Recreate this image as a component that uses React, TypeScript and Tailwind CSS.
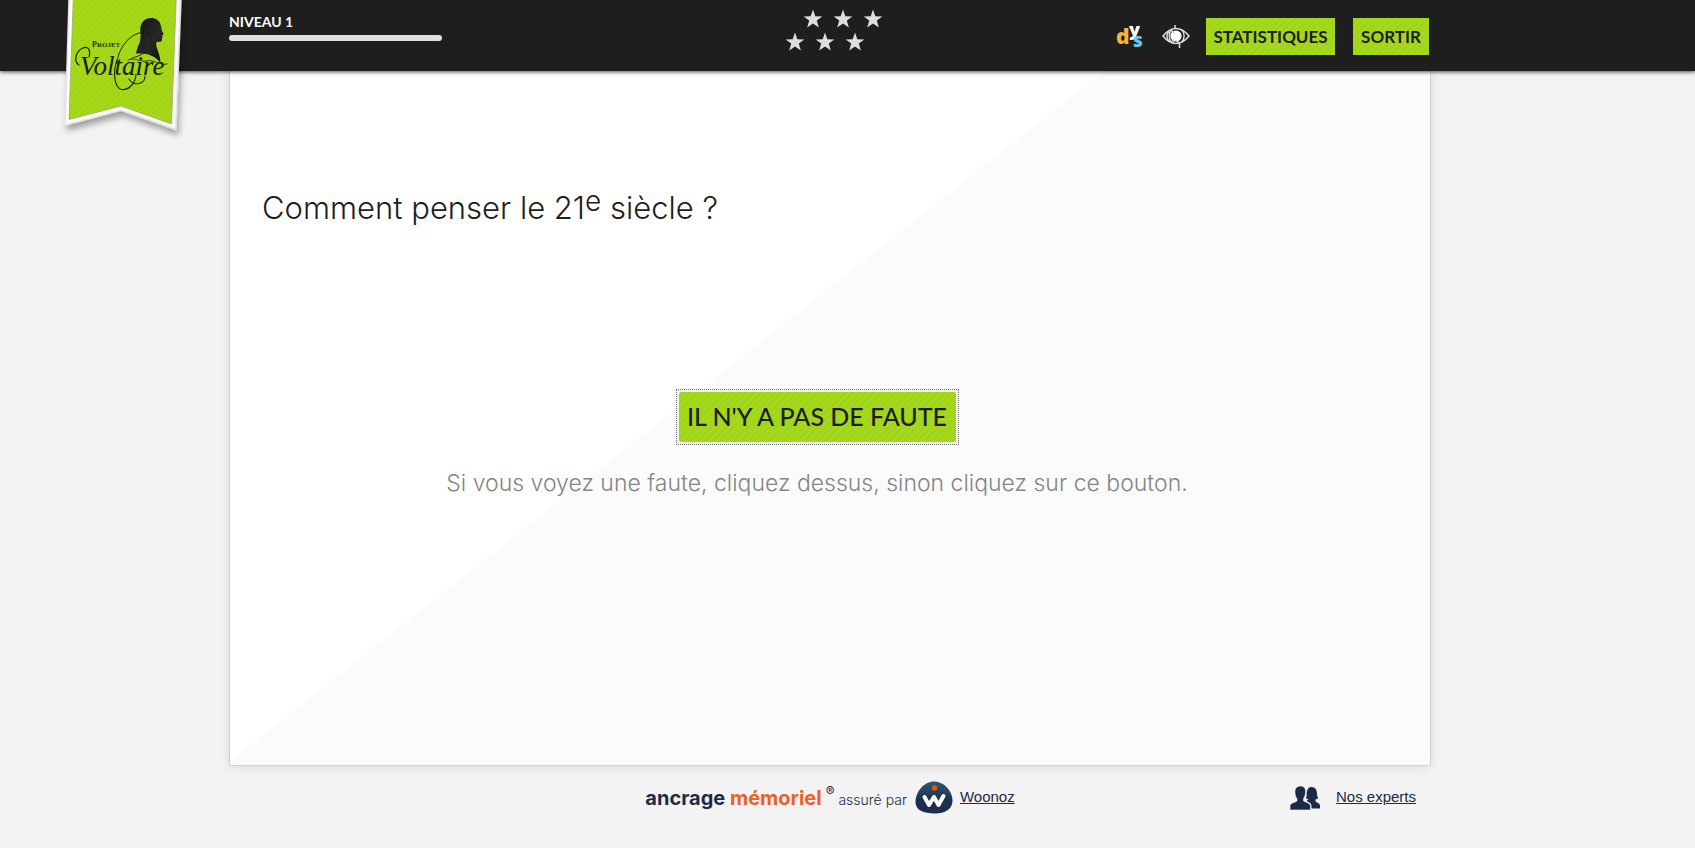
import React from "react";

const display = "font-['Lato','Open_Sans',sans-serif]";
const body = "font-['Inter','Noto_Sans',sans-serif]";
const stripes =
  "bg-[#a2d619] bg-[repeating-linear-gradient(135deg,#a7d925_0px,#a7d925_1px,#a1d517_2px,#a1d517_5px)]";

function RibbonLogo() {
  return (
    <svg width="130" height="142" viewBox="60 0 130 142" role="img" aria-label="Projet Voltaire">
      <defs>
        <pattern id="ribbon" width="6" height="6" patternUnits="userSpaceOnUse">
          <rect width="6" height="6" fill="#a1d516" />
          <path d="M-1 7L7-1M-1 1L1-1M5 7L7 5" stroke="#abdc30" strokeWidth="0.9" />
        </pattern>
        <linearGradient id="bust" x1="0" y1="0" x2="1" y2="1">
          <stop offset="0" stopColor="#111" />
          <stop offset="0.55" stopColor="#282828" />
          <stop offset="1" stopColor="#080808" />
        </linearGradient>
        <filter id="shade" x="-20%" y="-20%" width="140%" height="140%">
          <feDropShadow dx="2" dy="5" stdDeviation="3" floodColor="#000" floodOpacity="0.35" />
        </filter>
      </defs>
      <path d="M68.500-8L64.500 126L121 111L176.500 130.500L182-8Z" fill="#e4e4e4" filter="url(#shade)" />
      <path d="M70-8L66 124L121 109.500L175 128L180-8Z" fill="#fff" />
      <path d="M73.500-8L69 119.500L121 106L171.500 124L176.500-8Z" fill="url(#ribbon)" stroke="#9aa872" strokeWidth="0.8" />
      <path
        d="M140.500 33C139.500 26 142 20 147.500 18.400C153 16.800 158.500 19 160.200 23.500C161.400 26.500 161.500 29 162 31L163.800 34.200L162.300 35.300L162.500 37L161.800 38L162 40.200C161.500 42 159 42 157 41.700L156 44C156.500 49 160 53 160.500 63C158 59 153 56 148.500 54.500C145 53.500 139 53.500 136 53.500C136.500 50 138 46 139.500 43C140.500 40 140.900 36 140.500 33Z"
        fill="url(#bust)"
      />
      <text x="92" y="47" fontFamily="Liberation Serif, serif" fontWeight="700" fontSize="8" fill="#26330b">
        P<tspan fontSize="7">ROJET</tspan>
      </text>
      <text x="80" y="75" fontFamily="Liberation Serif, serif" fontStyle="italic" fontSize="27" fill="#1a2207">
        Voltaire
      </text>
      <g fill="none" stroke="#1a2207" strokeLinecap="round">
        <path d="M79 65C73 61 76 51 83 48C88 46 91 50 89 57" strokeWidth="1.200" />
        <path d="M117 62C119 46 132 31 146 32.500C155 34 153 47 144 53C138 57 133 57 131 59" strokeWidth="1" />
        <path d="M117 60C113 72 114 85 120 89C128 92 136 83 136 74M129 79C134 87 145 84 145 76" strokeWidth="1.100" />
        <path d="M128 60C134 57 140 62 146 61C155 59 160 66 167 64" strokeWidth="0.800" />
      </g>
    </svg>
  );
}

const starCenters = [
  [28, 11],
  [58, 11],
  [88, 11],
  [10, 34],
  [40, 34],
  [70, 34],
];

function Stars() {
  return (
    <svg width="98" height="44" viewBox="0 0 98 44" role="img" aria-label="6 étoiles">
      {starCenters.map(([x, y]) => (
        <path
          key={`${x}-${y}`}
          transform={`translate(${x} ${y})`}
          d="M0-9.500L2.300-2.800L9.300-2.600L3.800 1.600L5.800 8.500L0 4.500L-5.800 8.500L-3.800 1.600L-9.300-2.600L-2.300-2.800Z"
          fill="#dedede"
        />
      ))}
    </svg>
  );
}

function DysIcon() {
  return (
    <svg
      width="28"
      height="34"
      viewBox="0 0 28 34"
      aria-hidden="true"
      fontFamily="Open Sans, sans-serif"
      fontWeight="800"
    >
      <text x="0" y="24" fontSize="21" fill="#f9b233">d</text>
      <text x="13" y="16" fontSize="18" fill="#fff">y</text>
      <text x="17" y="27" fontSize="19" fill="#6fc4ee">s</text>
    </svg>
  );
}

function EyeIcon() {
  return (
    <svg width="28" height="24" viewBox="0 0 28 24" aria-hidden="true" fill="none" stroke="#dcdcdc">
      <path d="M1 11C5 6 9 3.500 14 3.500C19 3.500 23 6 27 11C23 16 19 18.500 14 18.500C9 18.500 5 16 1 11Z" strokeWidth="1.500" />
      <path d="M7 6C4.500 9 4.500 13 7 16.500M9.500 5C6.500 8.500 6.500 13.500 9.500 17.500M19.500 4.500C23 8 23 14 19.500 17.500" strokeWidth="1.500" />
      <circle cx="14" cy="11" r="5.600" fill="#fff" stroke="none" />
      <path d="M13 0V4M13 15L17.500 18V23M11 14V18M9 5L13 9" strokeWidth="1.500" />
    </svg>
  );
}

function WoonozIcon() {
  return (
    <svg width="38" height="33" viewBox="0 0 38 33" aria-hidden="true">
      <defs>
        <linearGradient id="pebble" x1="0" y1="0" x2="0" y2="1">
          <stop offset="0" stopColor="#34566f" />
          <stop offset="0.600" stopColor="#1b3050" />
        </linearGradient>
      </defs>
      <path d="M19 0.500C29 0.500 37.500 10 37.500 20C37.500 28 30 32.500 20 32.500C8 32.500 0.500 29 0.500 21C0.500 11 9 0.500 19 0.500Z" fill="url(#pebble)" />
      <path d="M9.500 16L14 24L19 16L23.500 24L28.500 15" fill="none" stroke="#fff" strokeWidth="4" strokeLinecap="round" strokeLinejoin="round" />
      <circle cx="19.500" cy="7" r="2.800" fill="#e8500f" />
    </svg>
  );
}

function ExpertsIcon() {
  return (
    <svg width="30" height="24" viewBox="0 0 30 24" aria-hidden="true" fill="#1b2b47">
      <path d="M21.500 1C25.500 1 27 4 27 8C27 10 28 11 28 12.500L25.500 13.500V15.500C27.500 17 30 17 30 20V22.500H21.500V20C21.500 17 18.500 16 16.500 15L18.500 13.500L16 12.500C17 10 16.500 8 16.800 6C17.300 3 18.500 1 21.500 1Z" />
      <path
        d="M10.500 0C14.500 0 16 3 15.500 7C15.300 10 14 11.500 13.500 12.500V15C16 16.500 20.500 17 20.500 20V24H0V20C0 17 5 16.500 7 15V12.500C6 11.500 5.200 10 5 7C4.500 3 6.500 0 10.500 0Z"
        stroke="#f3f3f3"
        strokeWidth="0.600"
      />
    </svg>
  );
}

export default function App() {
  return (
    <div className={`min-h-screen bg-[#f3f3f3] text-[#1e1e1e] ${body}`}>
      <header className="relative z-10 h-[71px] bg-[#1e1e1e] pr-[35px] shadow-[0_1px_4px_rgba(0,0,0,0.7)]">
        <a href="#accueil" className="absolute top-0 left-[60px]">
          <RibbonLogo />
        </a>
        <div className="mx-auto grid max-w-[1202px] grid-cols-[1fr_auto_1fr]">
          <div className={`pt-3 text-white ${display}`}>
            <div id="niveau" className="text-[14px] leading-5 font-bold">NIVEAU 1</div>
            <div
              role="progressbar"
              aria-labelledby="niveau"
              aria-valuenow={0}
              className="mt-[3px] h-[6px] w-[213px] rounded-full bg-[#dfdfdf]"
            />
          </div>
          <div className="pt-2 pl-2">
            <Stars />
          </div>
          <div className={`flex items-center justify-end pt-[18px] pr-[2px] ${display}`}>
            <button type="button" aria-label="Mode dys" className="mr-[18px]">
              <DysIcon />
            </button>
            <button type="button" aria-label="Accessibilité visuelle" className="mr-4">
              <EyeIcon />
            </button>
            <button type="button" className={`mr-[18px] h-[37px] w-[129px] text-[17px] font-bold ${stripes}`}>
              STATISTIQUES
            </button>
            <button type="button" className={`h-[37px] w-[76px] text-[17px] font-bold ${stripes}`}>
              SORTIR
            </button>
          </div>
        </div>
      </header>

      <div className="pr-[35px]">
        <main className="mx-auto min-h-[695px] max-w-[1202px] border border-t-0 border-[#d3d3d3] bg-[#fbfbfb] bg-[linear-gradient(to_bottom_right,#fff_50%,#fbfbfb_50%)] bg-[length:874px_690px] bg-no-repeat pt-[113px] pr-[58px] pl-8 shadow-[0_0_10px_rgba(0,0,0,0.12)]">
          <h1 className="text-[31px] leading-[48px] font-light">
            Comment penser le 21<sup className="top-[-8px] text-[28px]">e</sup> siècle ?
          </h1>
          <div className="mt-[157px] flex flex-col items-center">
            <button
              type="button"
              className="border border-dotted border-[#777] bg-[#f0f0f0] p-[2px]"
            >
              <span className={`flex h-[50px] w-[277px] items-center justify-center rounded-xs text-[25px] font-medium ${display} ${stripes}`}>
                IL N'Y A PAS DE FAUTE
              </span>
            </button>
            <p className="mt-[22px] text-[23px] leading-8 font-light text-[#858585]">
              Si vous voyez une faute, cliquez dessus, sinon cliquez sur ce bouton.
            </p>
          </div>
        </main>

        <footer className="mx-auto grid max-w-[1202px] grid-cols-[1fr_auto_1fr] items-center pt-[15px] text-[#1b2b47]">
          <div />
          <div className="flex items-center">
            <span className="text-[20px] leading-7 font-bold">
              ancrage <span className="text-[#e9622a]">mémoriel</span>
            </span>
            <sup className="ml-1 text-[13px]">®</sup>
            <span className="ml-1 pt-1 text-[14px] leading-5 font-light">assuré par</span>
            <span className="ml-2">
              <WoonozIcon />
            </span>
            <a href="#woonoz" className="ml-[7px] font-['Liberation_Sans',sans-serif] text-[15px] underline">
              Woonoz
            </a>
          </div>
          <div className="flex items-center justify-end pr-[15px]">
            <ExpertsIcon />
            <a href="#experts" className="ml-4 font-['Liberation_Sans',sans-serif] text-[15px] underline">
              Nos experts
            </a>
          </div>
        </footer>
      </div>
    </div>
  );
}
